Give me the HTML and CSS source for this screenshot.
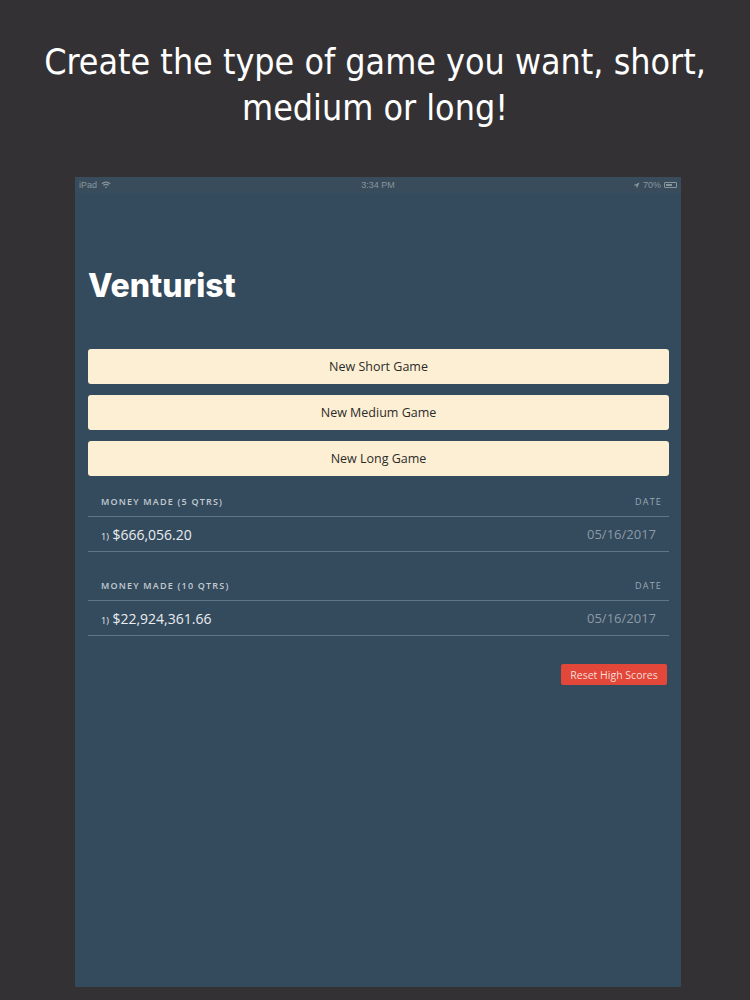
FILE: index.html
```html
<!DOCTYPE html>
<html lang="en">
<head>
  <meta charset="UTF-8" />
  <title>Venturist</title>
  <meta name="viewport" content="width=device-width, initial-scale=1" />
  <link rel="stylesheet" href="styles.css">
</head>
<body>
  <h1 class="caption">Create the type of game you want, short,<br>medium or long!</h1>

  <div class="screen">
    <!-- status bar -->
    <div class="status">
      <span class="status-left">iPad
        <svg class="wifi" viewBox="0 0 12 9" width="10" height="8">
          <path d="M1 3.2 A7 7 0 0 1 11 3.2" fill="none" stroke="#8b969c" stroke-width="1.3"/>
          <path d="M2.9 5.1 A4.3 4.3 0 0 1 9.1 5.1" fill="none" stroke="#8b969c" stroke-width="1.3"/>
          <path d="M4.6 7 L6 8.5 L7.4 7 A2 2 0 0 0 4.6 7 Z" fill="#8b969c"/>
        </svg>
      </span>
      <span class="status-time">3:34 PM</span>
      <span class="status-right">
        <svg viewBox="0 0 8 8" width="7" height="7"><path d="M7.5 0.5 L0.5 3.6 L3.8 4.2 L4.4 7.5 Z" fill="#8b969c"/></svg>
        70%
        <span class="battery"><span class="battery-fill"></span></span>
      </span>
    </div>

    <div class="content">
      <h2 class="title">Venturist</h2>

      <div class="buttons">
        <button class="game-btn">New Short Game</button>
        <button class="game-btn">New Medium Game</button>
        <button class="game-btn">New Long Game</button>
      </div>

      <!-- 5 qtrs -->
      <div class="scores">
        <div class="scores-head">
          <span>MONEY MADE (5 QTRS)</span>
          <span>DATE</span>
        </div>
        <div class="score-row">
          <span class="money"><small>1)</small> $666,056.20</span>
          <span class="date">05/16/2017</span>
        </div>
      </div>

      <!-- 10 qtrs -->
      <div class="scores">
        <div class="scores-head">
          <span>MONEY MADE (10 QTRS)</span>
          <span>DATE</span>
        </div>
        <div class="score-row">
          <span class="money"><small>1)</small> $22,924,361.66</span>
          <span class="date">05/16/2017</span>
        </div>
      </div>

      <div class="reset-wrap">
        <button class="reset-btn">Reset High Scores</button>
      </div>
    </div>
  </div>
</body>
</html>
```

FILE: styles.css
```css
body {
  margin: 0;
  background-color: #343134;
  font-family: "Open Sans", Arial, sans-serif;
  height: 1000px;
  overflow: hidden;
}
.caption {
  margin: 0;
  padding-top: 39px;
  font-family: "DejaVu Sans", Verdana, sans-serif;
  font-stretch: condensed;
  font-weight: normal;
  font-size: 35.5px;
  line-height: 46px;
  color: #fff;
  text-align: center;
}
.screen {
  margin-top: 46px;
  margin-left: 75px;
  width: 606px;
  height: 810px;
  background-color: #344a5d;
}
.status {
  display: flex;
  justify-content: space-between;
  align-items: center;
  height: 16px;
  padding: 0 4px;
  font-family: "Liberation Sans", Arial, sans-serif;
  font-size: 9px;
  color: #8b969c;
  background-color: #384c5c;
}
.status-left, .status-right {
  display: flex;
  align-items: center;
  gap: 4px;
  width: 120px;
}
.status-right {
  justify-content: flex-end;
  gap: 3px;
}
.battery {
  display: inline-block;
  width: 13px;
  height: 6px;
  border: 1px solid #8b969c;
  border-radius: 1px;
  padding: 1px;
  box-sizing: border-box;
}
.battery-fill {
  display: block;
  width: 70%;
  height: 100%;
  background: #8b969c;
}
.content {
  padding: 0 12px 0 13px;
}
.title {
  margin: 73px 0 0;
  font-family: "Inter", "Lato", sans-serif;
  font-weight: 800;
  font-size: 32px;
  line-height: 40px;
  color: #fff;
}
.buttons {
  display: flex;
  flex-direction: column;
  gap: 11px;
  margin-top: 43px;
}
.game-btn {
  height: 35px;
  border: none;
  border-radius: 3px;
  background-color: #fdefd3;
  color: #2b2b2b;
  font-family: "Open Sans", Arial, sans-serif;
  font-size: 12.5px;
  padding: 0;
}
.scores {
  margin-top: 14px;
}
.scores + .scores {
  margin-top: 22px;
}
.scores-head {
  display: flex;
  justify-content: space-between;
  padding: 0 7px 0 13px;
  height: 26px;
  line-height: 24px;
  font-size: 9px;
  font-weight: 600;
  letter-spacing: 1.2px;
  color: #c3cbd2;
  border-bottom: 1px solid #5f7686;
}
.scores-head span:last-child {
  color: #9aa8b3;
  font-weight: normal;
}
.score-row {
  display: flex;
  justify-content: space-between;
  align-items: center;
  height: 34px;
  padding: 0 13px;
  border-bottom: 1px solid #5f7686;
}
.money {
  font-size: 14px;
  color: #e9edf0;
}
.money small {
  font-size: 9px;
}
.date {
  font-size: 13px;
  color: #8d9ba7;
}
.reset-wrap {
  display: flex;
  justify-content: flex-end;
  margin-top: 28px;
  padding-right: 2px;
}
.reset-btn {
  height: 21px;
  width: 106px;
  border: none;
  border-radius: 2px;
  background-color: #e2473a;
  color: #f7dcd6;
  font-family: "Open Sans", Arial, sans-serif;
  font-size: 10.5px;
  padding: 0;
}
```
